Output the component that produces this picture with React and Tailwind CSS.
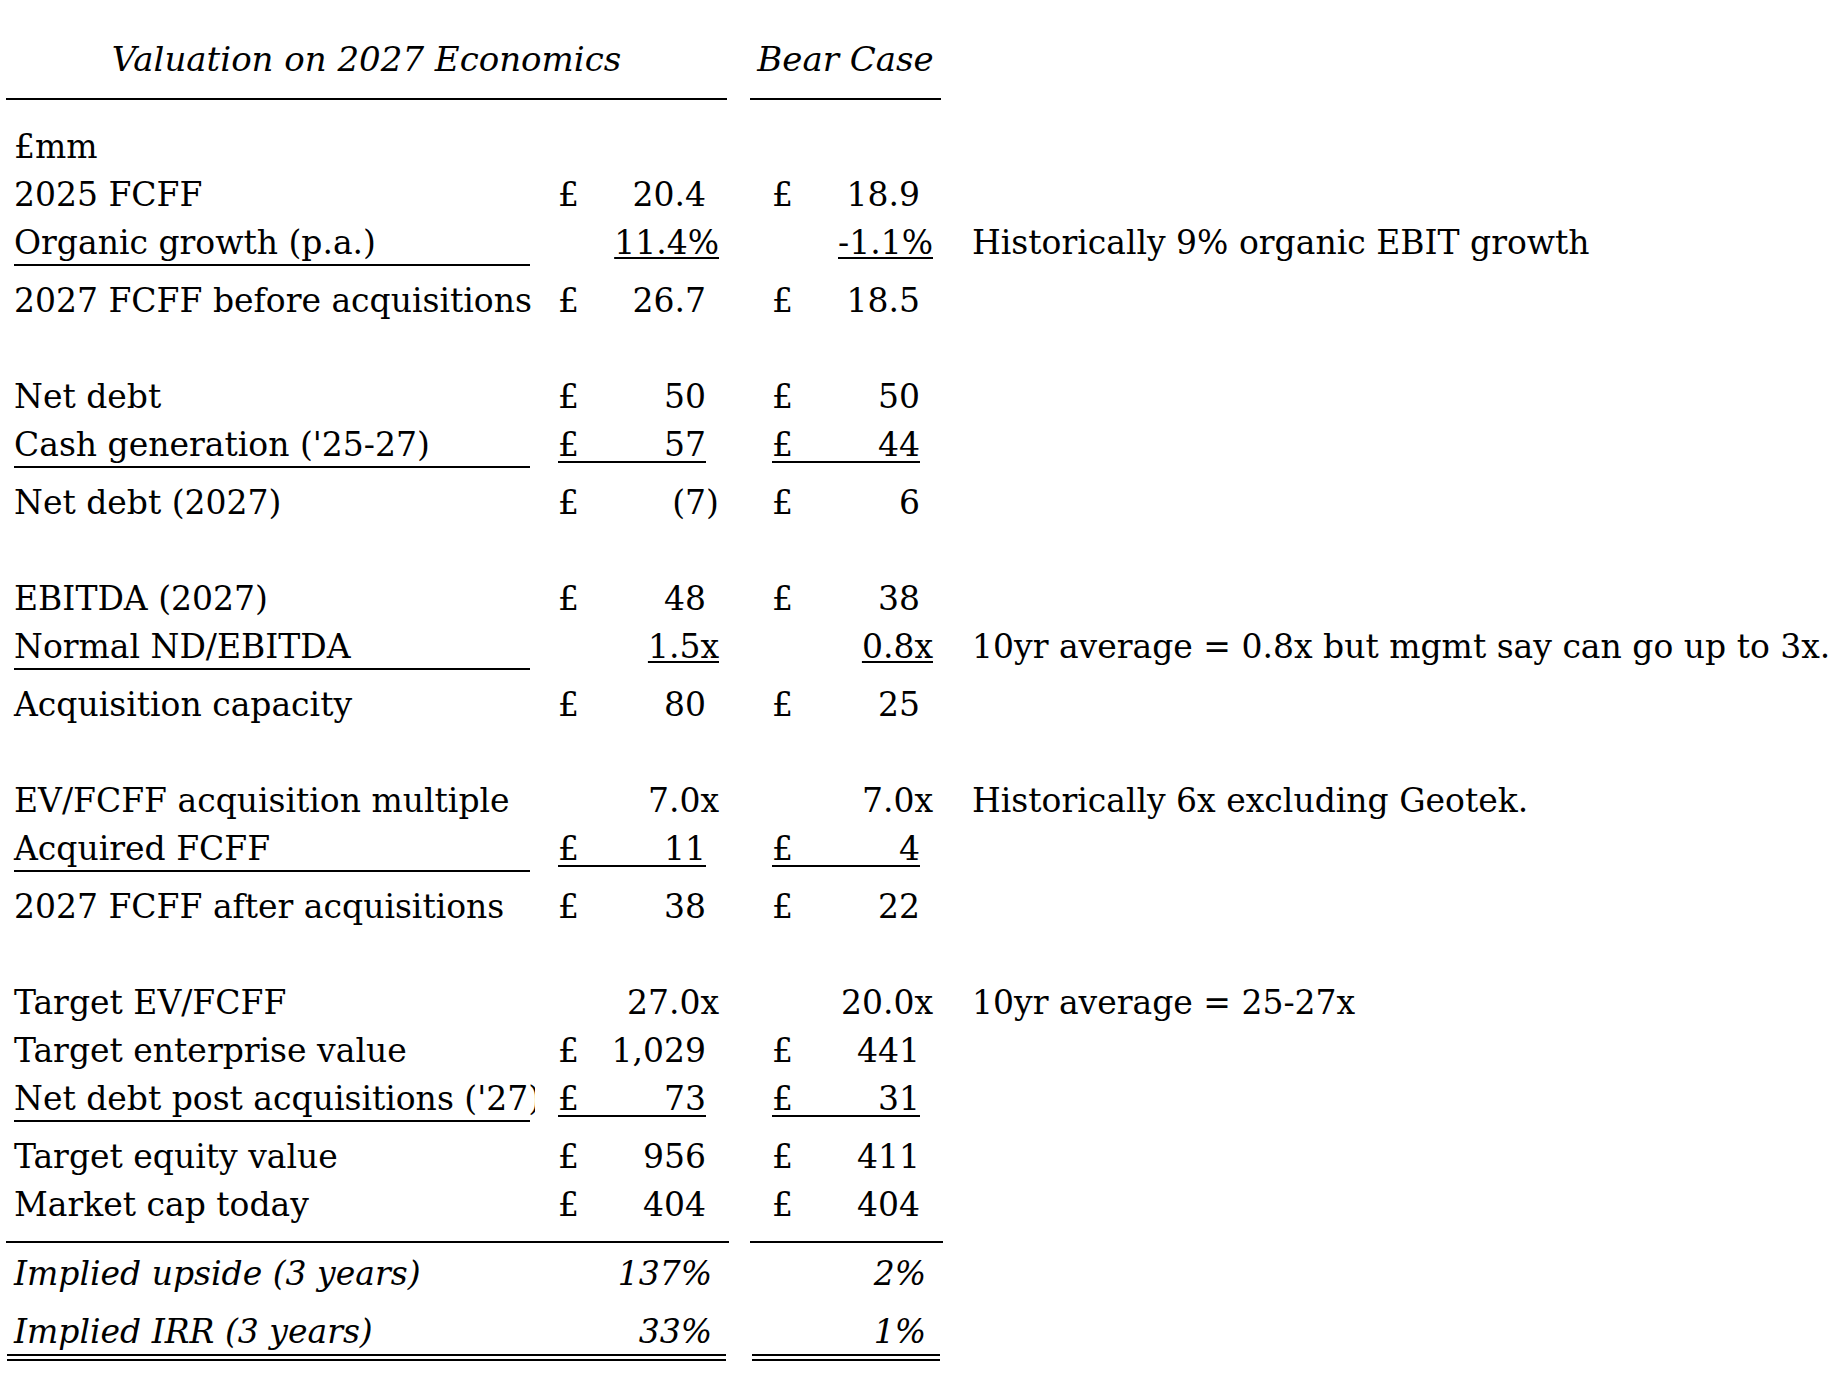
import React from "react";

const P = true;

const rows = [
  { label: "£mm" },
  { label: "2025 FCFF", a: { p: P, v: "20.4" }, b: { p: P, v: "18.9" } },
  {
    label: "Organic growth (p.a.)",
    lu: true,
    a: { v: "11.4%", wide: true, tu: true },
    b: { v: "-1.1%", wide: true, tu: true },
    note: "Historically 9% organic EBIT growth",
  },
  { label: "2027 FCFF before acquisitions", a: { p: P, v: "26.7" }, b: { p: P, v: "18.5" } },
  { blank: true },
  { label: "Net debt", a: { p: P, v: "50" }, b: { p: P, v: "50" } },
  { label: "Cash generation ('25-27)", lu: true, a: { p: P, v: "57", u: true }, b: { p: P, v: "44", u: true } },
  { label: "Net debt (2027)", a: { p: P, v: "(7)", wide: true }, b: { p: P, v: "6" } },
  { blank: true },
  { label: "EBITDA (2027)", a: { p: P, v: "48" }, b: { p: P, v: "38" } },
  {
    label: "Normal ND/EBITDA",
    lu: true,
    a: { v: "1.5x", wide: true, tu: true },
    b: { v: "0.8x", wide: true, tu: true },
    note: "10yr average = 0.8x but mgmt say can go up to 3x.",
  },
  { label: "Acquisition capacity", a: { p: P, v: "80" }, b: { p: P, v: "25" } },
  { blank: true },
  {
    label: "EV/FCFF acquisition multiple",
    a: { v: "7.0x", wide: true },
    b: { v: "7.0x", wide: true },
    note: "Historically 6x excluding Geotek.",
  },
  { label: "Acquired FCFF", lu: true, a: { p: P, v: "11", u: true }, b: { p: P, v: "4", u: true } },
  { label: "2027 FCFF after acquisitions", a: { p: P, v: "38" }, b: { p: P, v: "22" } },
  { blank: true },
  {
    label: "Target EV/FCFF",
    a: { v: "27.0x", wide: true },
    b: { v: "20.0x", wide: true },
    note: "10yr average = 25-27x",
  },
  { label: "Target enterprise value", a: { p: P, v: "1,029" }, b: { p: P, v: "441" } },
  {
    label: "Net debt post acquisitions ('27)",
    lu: true,
    clip: true,
    a: { p: P, v: "73", u: true },
    b: { p: P, v: "31", u: true },
  },
  { label: "Target equity value", a: { p: P, v: "956" }, b: { p: P, v: "411" } },
  { label: "Market cap today", a: { p: P, v: "404" }, b: { p: P, v: "404" } },
];

function ValueCell({ c }) {
  if (!c) return null;
  if (c.wide) {
    return (
      <div className="flex w-[161px] items-start whitespace-nowrap">
        <span>{c.p ? "£" : ""}</span>
        <span className={`ml-auto ${c.tu ? "underline decoration-2 underline-offset-[3px]" : ""}`}>{c.v}</span>
      </div>
    );
  }
  return (
    <div
      className={`flex w-[148px] items-start whitespace-nowrap ${
        c.u ? "h-[42px] border-b-2 border-black" : ""
      }`}
    >
      <span>{c.p ? "£" : ""}</span>
      <span className="ml-auto">{c.v}</span>
    </div>
  );
}

function Row({ r }) {
  if (r.blank) return <div className="h-[48px]" />;
  return (
    <div className={`flex items-start ${r.lu ? "h-[58px]" : "h-[48px]"}`}>
      <div className="w-[558px] shrink-0 pl-[14px]">
        <div className={`${r.clip ? "w-[521px] overflow-hidden" : "w-[521px]"} whitespace-nowrap`}>
          <div className={`w-[516px] ${r.lu ? "h-[47px] border-b-2 border-black" : ""}`}>{r.label}</div>
        </div>
      </div>
      <div className="w-[214px] shrink-0">
        <ValueCell c={r.a} />
      </div>
      <div className="w-[200px] shrink-0">
        <ValueCell c={r.b} />
      </div>
      {r.note ? <div className="whitespace-nowrap">{r.note}</div> : null}
    </div>
  );
}

export default function App() {
  return (
    <div className="w-[1830px] h-[1390px] overflow-hidden bg-white text-black font-['DejaVu_Serif',serif] text-[33px] leading-[48px]">
      <div className="flex pt-[35px]">
        <div className="ml-[6px] w-[721px] border-b-2 border-black pb-[15px] text-center text-[34px] italic">
          Valuation on 2027 Economics
        </div>
        <div className="ml-[23px] w-[191px] border-b-2 border-black pb-[15px] text-center text-[34px] italic">
          Bear Case
        </div>
      </div>

      <div className="mt-[23px] flex flex-col">
        {rows.map((r, i) => (
          <Row key={i} r={r} />
        ))}
      </div>

      <div className="mt-[12px] flex">
        <div className="ml-[6px] h-[2px] w-[723px] bg-black" />
        <div className="ml-[21px] h-[2px] w-[193px] bg-black" />
      </div>

      <div className="mt-[7px] flex h-[58px] items-start italic">
        <div className="w-[558px] shrink-0 pl-[14px] whitespace-nowrap">Implied upside (3 years)</div>
        <div className="w-[214px] shrink-0">
          <div className="w-[154px] text-right">137%</div>
        </div>
        <div className="w-[200px] shrink-0">
          <div className="w-[154px] text-right">2%</div>
        </div>
      </div>
      <div className="flex h-[46px] items-start italic">
        <div className="w-[558px] shrink-0 pl-[14px] whitespace-nowrap">Implied IRR (3 years)</div>
        <div className="w-[214px] shrink-0">
          <div className="w-[154px] text-right">33%</div>
        </div>
        <div className="w-[200px] shrink-0">
          <div className="w-[154px] text-right">1%</div>
        </div>
      </div>
      <div className="flex">
        <div className="ml-[7px] h-[7px] w-[719px] border-y-2 border-black" />
        <div className="ml-[26px] h-[7px] w-[188px] border-y-2 border-black" />
      </div>
    </div>
  );
}
